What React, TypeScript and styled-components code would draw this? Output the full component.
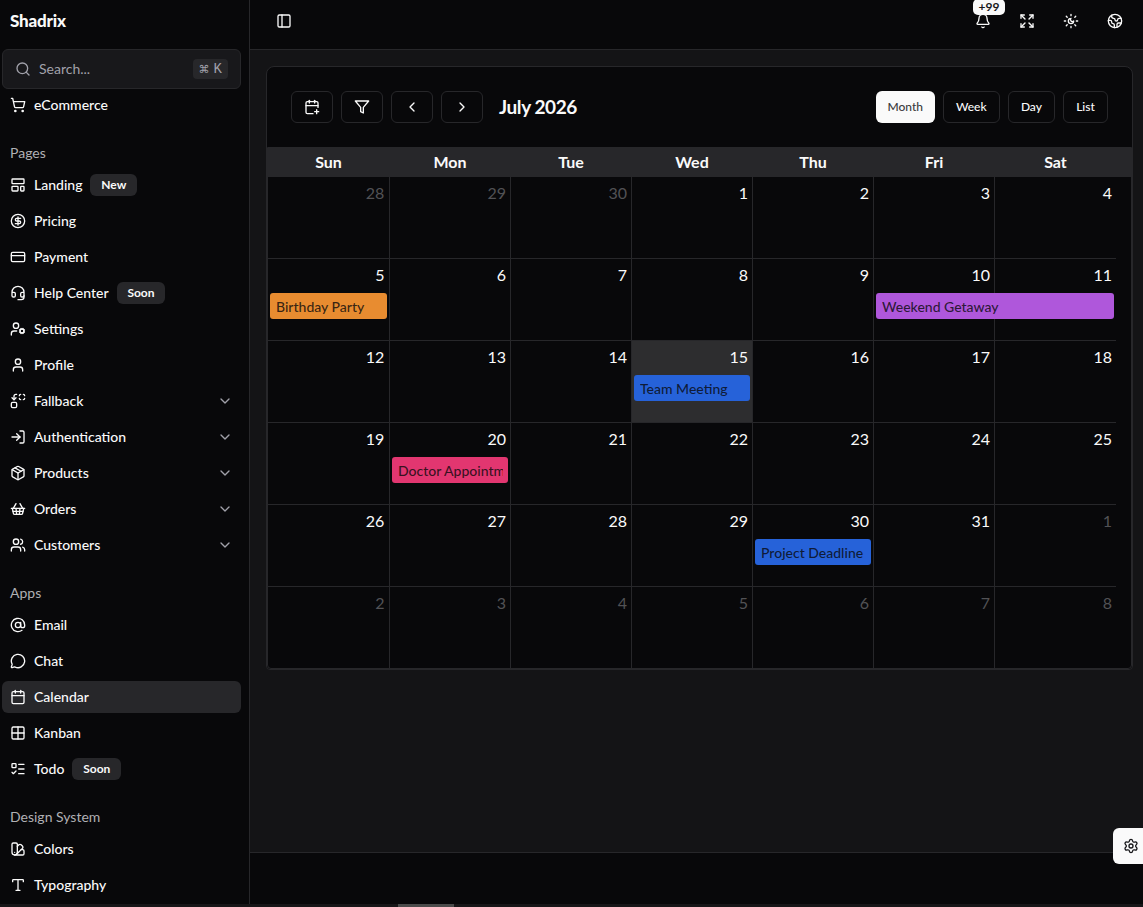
import React from "react";
import styled, { createGlobalStyle } from "styled-components";
import {
  AtSign, Bell, Calendar, CalendarPlus, ChevronDown, ChevronLeft, ChevronRight,
  CircleDollarSign, CreditCard, Earth, Expand, Grid2X2, Headset,
  LayoutTemplate, ListTodo, LogIn, MessageCircle, Package, PanelLeft,
  Search, Settings, ShoppingBasket, ShoppingCart, SwatchBook, Type, User,
  UserCog, Users,
} from "lucide-react";

const GlobalStyle = createGlobalStyle`
  * { box-sizing: border-box; }
  body {
    margin: 0;
    background: #08080a;
    color: #fafafa;
    font-family: Lato, "Liberation Sans", sans-serif;
    overflow: hidden;
  }
  button { font: inherit; color: inherit; margin: 0; }
`;

const Page = styled.div`
  height: 907px;
  display: flex;
  flex-direction: column;
`;
const Shell = styled.div`
  flex: 1;
  min-height: 0;
  display: flex;
`;
const Scrollbar = styled.div`
  height: 3px;
  padding-left: 398px;
  background: #171618;
`;
const Thumb = styled.div`
  width: 56px;
  height: 3px;
  background: #4b4b4b;
`;

const Sidebar = styled.aside`
  width: 250px;
  flex: none;
  border-right: 1px solid #27272a;
  padding: 0 8px 0 2px;
  overflow: hidden;
`;
const Brand = styled.div`
  height: 49px;
  padding: 9px 8px 0;
  font-size: 17px;
  line-height: 24px;
  font-weight: 900;
  letter-spacing: -0.2px;
`;
const SearchBox = styled.div`
  height: 40px;
  display: flex;
  align-items: center;
  gap: 8px;
  padding: 0 12px;
  border: 1px solid #27272a;
  border-radius: 6px;
  background: #18181b;
  color: #a1a1aa;
  font-size: 14px;
  line-height: 20px;
`;
const Kbd = styled.kbd`
  margin-left: auto;
  height: 20px;
  padding: 0 6px;
  display: flex;
  align-items: center;
  gap: 4px;
  border-radius: 4px;
  background: #27272a;
  font: 14px/20px "Liberation Mono", monospace;
  span { font: 11px "DejaVu Sans", sans-serif; }
`;
const Group = styled.section`
  margin-bottom: 16px;
  display: flex;
  flex-direction: column;
  gap: 4px;
`;
const GroupLabel = styled.h2`
  margin: 0 0 -4px;
  height: 32px;
  padding-left: 8px;
  font-size: 14px;
  line-height: 32px;
  font-weight: 400;
  color: #b0b0b4;
`;
const Item = styled.a<{ $active?: boolean }>`
  height: 32px;
  flex: none;
  display: flex;
  align-items: center;
  gap: 8px;
  padding: 0 8px;
  border-radius: 6px;
  font-size: 14px;
  font-weight: 500;
  line-height: 20px;
  background: ${(p) => (p.$active ? "#27272a" : "transparent")};
  svg { flex: none; }
  svg:nth-of-type(2) { margin-left: auto; color: #a1a1aa; }
`;
const Tag = styled.span`
  height: 22px;
  padding: 0 10.8px;
  border-radius: 6px;
  background: #27272a;
  font-size: 12px;
  line-height: 22px;
  font-weight: 700;
`;

const Main = styled.div`
  flex: 1;
  min-width: 0;
  display: flex;
  flex-direction: column;
  background: #141416;
`;
const TopBar = styled.header`
  height: 50px;
  flex: none;
  padding: 0 10px 8px 16px;
  display: flex;
  align-items: center;
  justify-content: space-between;
  background: #08080a;
  border-bottom: 1px solid #27272a;
`;
const TopActions = styled.div`
  display: flex;
  gap: 8px;
`;
const IconButton = styled.button`
  position: relative;
  width: 36px;
  height: 36px;
  display: grid;
  place-items: center;
  border: 0;
  background: none;
  padding: 0;
`;
const CountBadge = styled.span`
  position: absolute;
  top: -4px;
  left: 8px;
  width: 32px;
  height: 16px;
  border-radius: 5px;
  background: #fafafa;
  color: #18181b;
  font-size: 12px;
  line-height: 16px;
  font-weight: 700;
  text-align: center;
`;
const Content = styled.main`
  flex: 1;
  padding: 16px 10px 0 16px;
`;
const Card = styled.div`
  border: 1px solid #27272a;
  border-radius: 8px 8px 4px 4px;
  background: #08080a;
  overflow: hidden;
`;
const Toolbar = styled.div`
  height: 80px;
  display: flex;
  align-items: center;
  gap: 8px;
  padding: 0 24px;
`;
const ToolButton = styled.button`
  height: 32px;
  width: 42px;
  padding: 0;
  display: flex;
  align-items: center;
  justify-content: center;
  border: 1px solid #27272a;
  border-radius: 6px;
  background: transparent;
`;
const ViewButton = styled.button<{ $selected: boolean }>`
  height: 32px;
  padding: 0 ${(p) => (p.$selected ? "11.8px" : "12.15px")};
  border: ${(p) => (p.$selected ? "0" : "1px solid #27272a")};
  border-radius: 6px;
  background: ${(p) => (p.$selected ? "#fafafa" : "transparent")};
  color: ${(p) => (p.$selected ? "#3a3a3d" : "#fafafa")};
  font-size: 12px;
  font-weight: 500;
  line-height: 16px;
`;
const MonthTitle = styled.h1`
  margin: 0 auto 0 8px;
  font-size: 19px;
  font-weight: 700;
  line-height: 28px;
  letter-spacing: -0.4px;
`;

const columns = "122px repeat(6, 121px)";
const MonthView = styled.div`
  border: 1px solid #27272a;
  border-radius: 0 0 4px 4px;
`;
const Weekdays = styled.div`
  height: 29px;
  display: grid;
  grid-template-columns: ${columns};
  background: #27272a;
  font-size: 16px;
  line-height: 28px;
  font-weight: 700;
  text-align: center;
`;
const Weekday = styled.div`
  padding-right: 1px;
  &:last-child { padding-right: 0; }
`;
const Week = styled.div`
  display: grid;
  grid-template-columns: ${columns};
  grid-template-rows: 82px;
  &:last-child { grid-template-rows: 81px; }
`;
const Day = styled.div<{ $col: number; $muted: boolean; $today: boolean }>`
  grid-row: 1;
  grid-column: ${(p) => p.$col};
  padding: 4px ${(p) => (p.$col === 1 ? 4.6 : 4)}px 4px 4px;
  border-right: ${(p) => (p.$col < 7 ? "1px solid #27272a" : "0")};
  border-bottom: 1px solid #27272a;
  ${Week}:last-child & { border-bottom: 0; }
  background: ${(p) => (p.$today ? "#2d2d2f" : "transparent")};
  color: ${(p) => (p.$muted ? "#525255" : "#fafafa")};
  font-size: 16px;
  line-height: 24px;
  text-align: right;
`;
const Event = styled.div<{ $start: number; $span: number; $color: string }>`
  grid-row: 1;
  grid-column: ${(p) => p.$start} / span ${(p) => p.$span};
  height: 26px;
  margin: 34px ${(p) => (p.$start + p.$span > 7 ? 2 : 3)}px 0 2px;
  padding: 0 5px 0 6px;
  border-radius: 3px;
  background: ${(p) => p.$color};
  color: rgba(9, 9, 11, 0.8);
  font-size: 14px;
  font-weight: 500;
  line-height: 28px;
  white-space: nowrap;
`;
const EventText = styled.div`
  overflow: hidden;
`;
const Footer = styled.footer`
  height: 52px;
  flex: none;
  border-top: 1px solid #27272a;
  background: #08080a;
`;
const SettingsTab = styled.button`
  position: fixed;
  right: 0;
  top: 828px;
  width: 30px;
  height: 36px;
  padding: 0 0 0 10px;
  display: flex;
  align-items: center;
  border: 0;
  border-radius: 6px 0 0 6px;
  background: #fafafa;
  color: #18181b;
`;

const StrokeIcon = styled.svg.attrs({
  width: 16,
  height: 16,
  viewBox: "0 0 24 24",
  fill: "none",
  stroke: "currentColor",
  strokeWidth: 2,
  strokeLinecap: "round",
  strokeLinejoin: "round",
})``;
const FilterIcon = () => (
  <StrokeIcon>
    <polygon points="22 3 2 3 10 12.46 10 19 14 21 14 12.46 22 3" />
  </StrokeIcon>
);
const SunMoonIcon = () => (
  <StrokeIcon>
    <path d="M12 8a2.83 2.83 0 0 0 4 4 4 4 0 1 1-4-4" />
    <path d="M12 2v2M12 20v2M4.9 4.9l1.4 1.4M17.7 17.7l1.4 1.4M2 12h2M20 12h2M6.3 17.7l-1.4 1.4M19.1 4.9l-1.4 1.4" />
  </StrokeIcon>
);
const ReplaceIcon = () => (
  <StrokeIcon>
    <path d="M14 4c0-1.1.9-2 2-2M20 2c1.1 0 2 .9 2 2M22 8c0 1.1-.9 2-2 2M16 10c-1.1 0-2-.9-2-2" />
    <path d="m3 7 3 3 3-3" />
    <path d="M6 10V5c0-1.7 1.3-3 3-3h1" />
    <rect width="8" height="8" x="2" y="14" rx="2" />
  </StrokeIcon>
);

type Entry = { icon: React.ElementType; text: string; tag?: string; more?: boolean; active?: boolean };
const groups: { label?: string; items: Entry[] }[] = [
  { items: [{ icon: ShoppingCart, text: "eCommerce" }] },
  {
    label: "Pages",
    items: [
      { icon: LayoutTemplate, text: "Landing", tag: "New" },
      { icon: CircleDollarSign, text: "Pricing" },
      { icon: CreditCard, text: "Payment" },
      { icon: Headset, text: "Help Center", tag: "Soon" },
      { icon: UserCog, text: "Settings" },
      { icon: User, text: "Profile" },
      { icon: ReplaceIcon, text: "Fallback", more: true },
      { icon: LogIn, text: "Authentication", more: true },
      { icon: Package, text: "Products", more: true },
      { icon: ShoppingBasket, text: "Orders", more: true },
      { icon: Users, text: "Customers", more: true },
    ],
  },
  {
    label: "Apps",
    items: [
      { icon: AtSign, text: "Email" },
      { icon: MessageCircle, text: "Chat" },
      { icon: Calendar, text: "Calendar", active: true },
      { icon: Grid2X2, text: "Kanban" },
      { icon: ListTodo, text: "Todo", tag: "Soon" },
    ],
  },
  {
    label: "Design System",
    items: [
      { icon: SwatchBook, text: "Colors" },
      { icon: Type, text: "Typography" },
    ],
  },
];

const events = [
  { week: 1, start: 1, span: 1, color: "#e88c30", text: "Birthday Party" },
  { week: 1, start: 6, span: 2, color: "#af57db", text: "Weekend Getaway" },
  { week: 2, start: 4, span: 1, color: "#2662d9", text: "Team Meeting" },
  { week: 3, start: 2, span: 1, color: "#e23670", text: "Doctor Appointment" },
  { week: 4, start: 5, span: 1, color: "#2662d9", text: "Project Deadline" },
];

// July 1st sits in the fourth cell; cells outside 1..31 wrap into the neighbouring months.
const dayAt = (index: number) => {
  const n = index - 2;
  if (n < 1) return { n: n + 30, muted: true };
  if (n > 31) return { n: n - 31, muted: true };
  return { n, muted: false };
};

export default function App() {
  return (
    <>
      <GlobalStyle />
      <Page>
        <Shell>
          <Sidebar>
            <Brand>Shadrix</Brand>
            <SearchBox>
              <Search size={16} />
              Search...
              <Kbd><span>⌘</span>K</Kbd>
            </SearchBox>
            {groups.map((g, i) => (
              <Group key={i}>
                {g.label && <GroupLabel>{g.label}</GroupLabel>}
                {g.items.map(({ icon: Icon, ...e }) => (
                  <Item key={e.text} $active={e.active}>
                    <Icon size={16} />
                    <span>{e.text}</span>
                    {e.tag && <Tag>{e.tag}</Tag>}
                    {e.more && <ChevronDown size={16} />}
                  </Item>
                ))}
              </Group>
            ))}
          </Sidebar>
          <Main>
            <TopBar>
              <IconButton><PanelLeft size={16} /></IconButton>
              <TopActions>
                <IconButton><Bell size={16} /><CountBadge>+99</CountBadge></IconButton>
                <IconButton><Expand size={16} /></IconButton>
                <IconButton><SunMoonIcon /></IconButton>
                <IconButton><Earth size={16} /></IconButton>
              </TopActions>
            </TopBar>
            <Content>
              <Card>
                <Toolbar>
                  <ToolButton><CalendarPlus size={16} /></ToolButton>
                  <ToolButton><FilterIcon /></ToolButton>
                  <ToolButton><ChevronLeft size={16} /></ToolButton>
                  <ToolButton><ChevronRight size={16} /></ToolButton>
                  <MonthTitle>July 2026</MonthTitle>
                  {["Month", "Week", "Day", "List"].map((v) => (
                    <ViewButton key={v} $selected={v === "Month"}>{v}</ViewButton>
                  ))}
                </Toolbar>
                <MonthView>
                  <Weekdays>
                    {["Sun", "Mon", "Tue", "Wed", "Thu", "Fri", "Sat"].map((d) => <Weekday key={d}>{d}</Weekday>)}
                  </Weekdays>
                  {[0, 1, 2, 3, 4, 5].map((w) => (
                    <Week key={w}>
                      {[0, 1, 2, 3, 4, 5, 6].map((c) => {
                        const d = dayAt(w * 7 + c);
                        return (
                          <Day key={c} $col={c + 1} $muted={d.muted} $today={!d.muted && d.n === 15}>{d.n}</Day>
                        );
                      })}
                      {events.filter((e) => e.week === w).map((e) => (
                        <Event key={e.text} $start={e.start} $span={e.span} $color={e.color}>
                          <EventText>{e.text}</EventText>
                        </Event>
                      ))}
                    </Week>
                  ))}
                </MonthView>
              </Card>
            </Content>
            <Footer />
          </Main>
        </Shell>
        <Scrollbar><Thumb /></Scrollbar>
      </Page>
      <SettingsTab><Settings size={16} /></SettingsTab>
    </>
  );
}
